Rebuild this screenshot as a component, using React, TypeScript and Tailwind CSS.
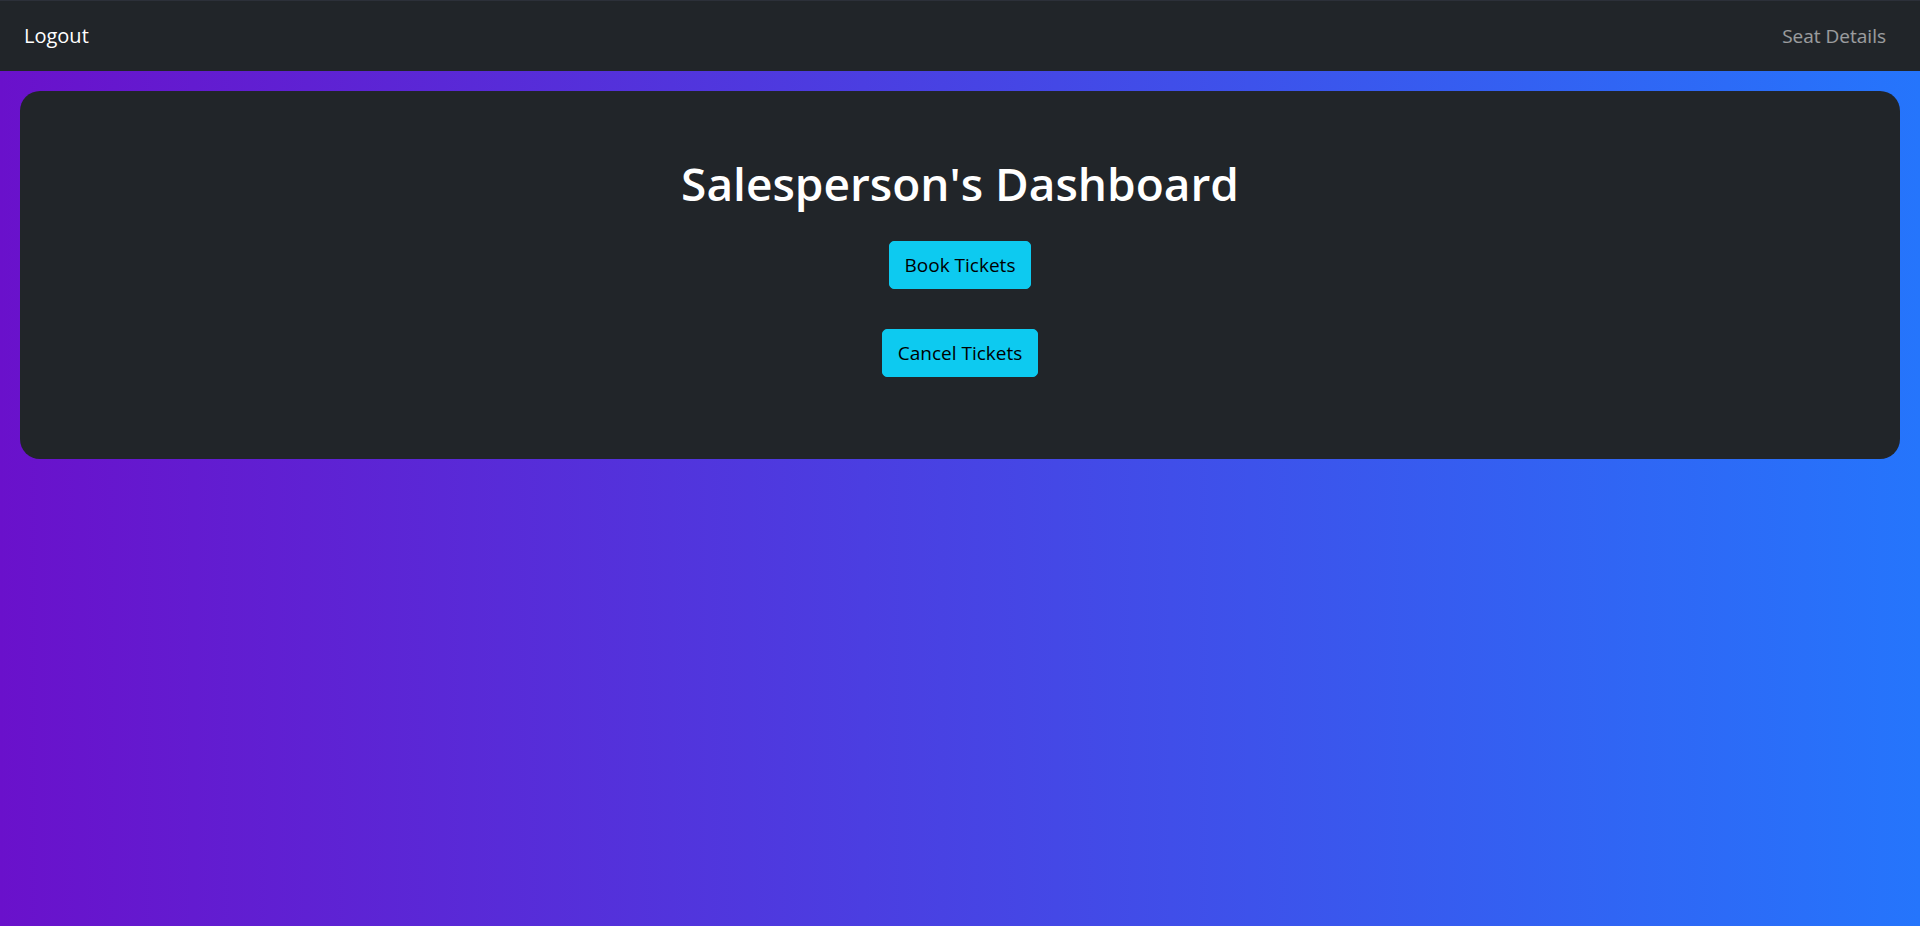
import React from 'react';

const font = { fontFamily: '"Open Sans", "Noto Sans", "Liberation Sans", sans-serif' };

const NavBar: React.FC = () => (
  <nav className="h-[71px] bg-[#212529] border-t border-[#2c3039] flex items-center justify-between px-[24px]">
    <a href="#" className="text-white text-[20px] leading-none">
      Logout
    </a>
    <a href="#" className="text-white/55 text-[19px] leading-none mr-[10px]">
      Seat Details
    </a>
  </nav>
);

const ActionButton: React.FC<{ label: string }> = ({ label }) => (
  <button
    type="button"
    className="h-[48px] px-[15px] bg-[#0dcaf0] text-black text-[19px] rounded-[5px] border border-[#0dcaf0]"
  >
    {label}
  </button>
);

export default function App() {
  return (
    <div
      className="min-h-screen bg-[linear-gradient(to_right,#6a11cb,#2575fc)]"
      style={font}
    >
      <NavBar />
      <div className="px-[20px] pt-[20px]">
        <div className="bg-[#212529] rounded-[20px] pt-[62px] pb-[82px] flex flex-col items-center">
          <h1 className="text-white text-[46px] font-semibold leading-[60px]">
            Salesperson's Dashboard
          </h1>
          <div className="mt-[28px]">
            <ActionButton label="Book Tickets" />
          </div>
          <div className="mt-[40px]">
            <ActionButton label="Cancel Tickets" />
          </div>
        </div>
      </div>
    </div>
  );
}
